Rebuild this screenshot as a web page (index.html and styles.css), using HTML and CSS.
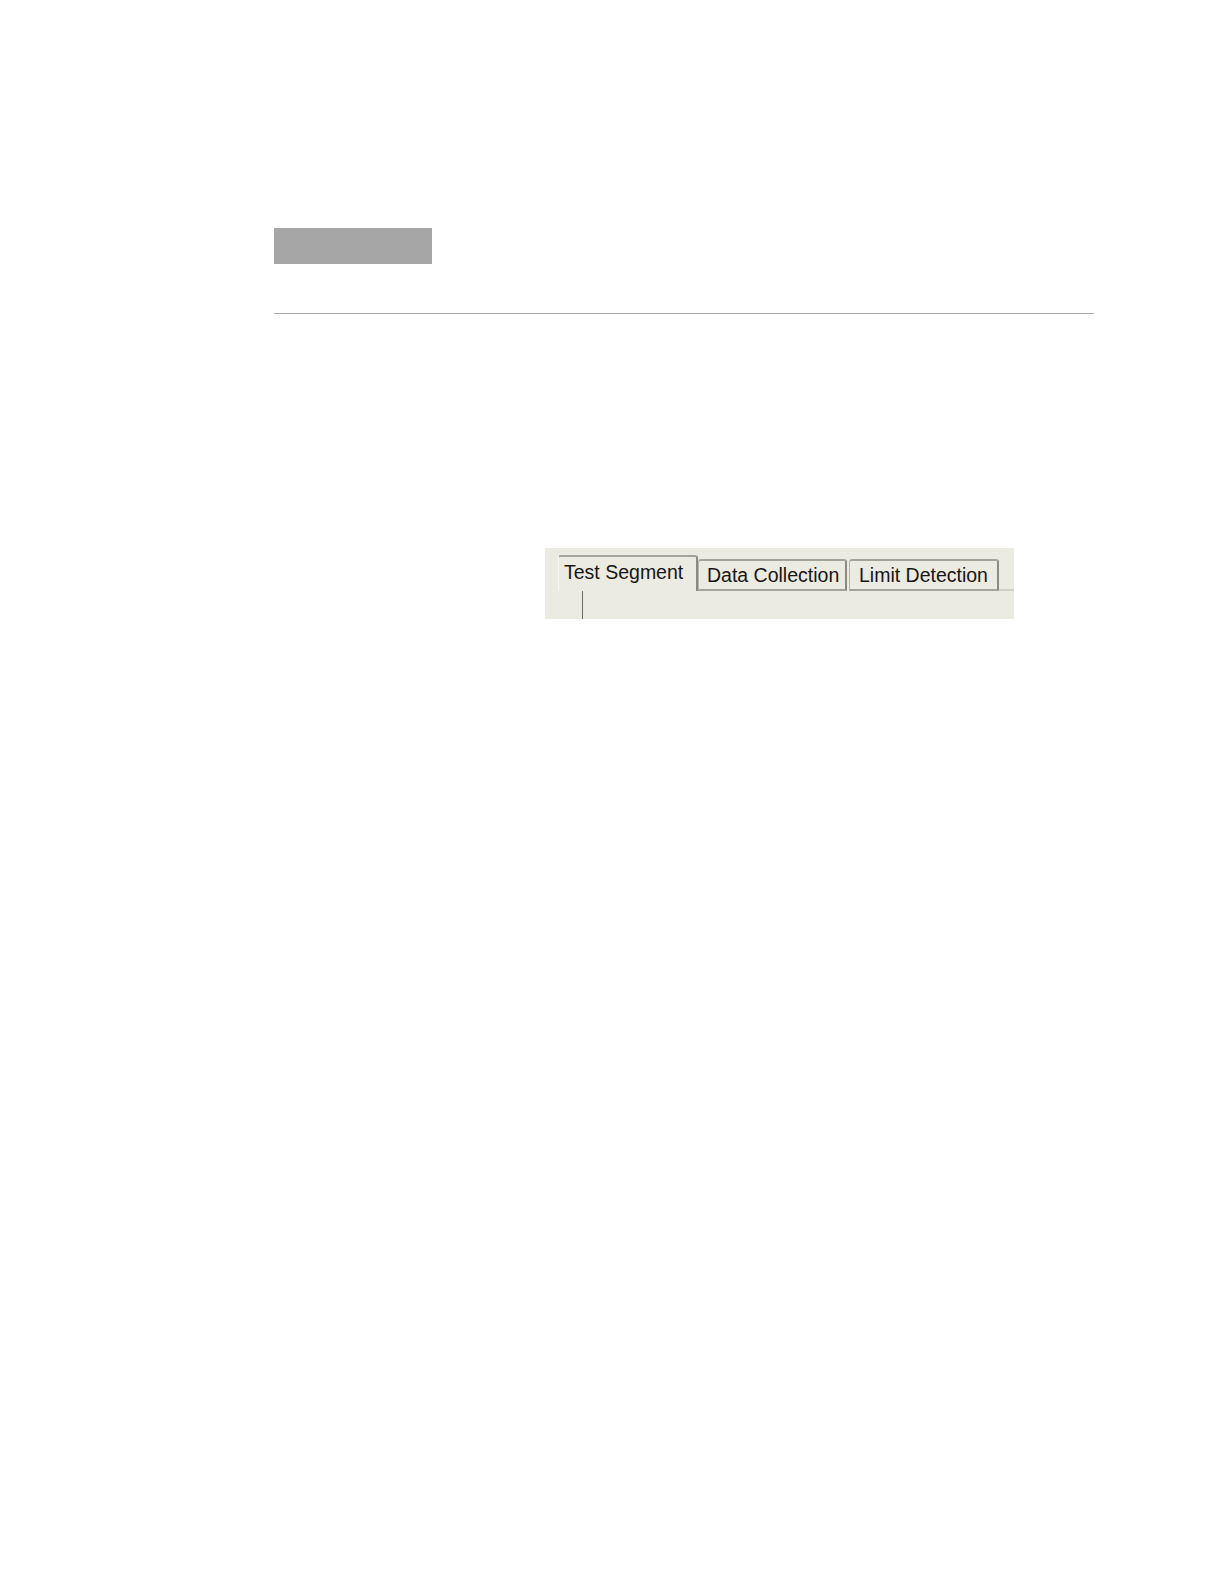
FILE: index.html
```html
<!DOCTYPE html>
<html>
<head>
<meta charset="utf-8">
<link rel="stylesheet" href="styles.css">
</head>
<body>
<div class="page">
  <div class="tag"></div>
  <div class="rule"></div>
  <div class="figure">
    <div class="tabstrip">
      <div class="tab active">Test Segment</div>
      <div class="tab tab-data">Data Collection</div>
      <div class="tab tab-limit">Limit Detection</div>
      <div class="strip-rest"></div>
    </div>
    <div class="panel">
      <div class="vline"></div>
    </div>
  </div>
</div>
</body>
</html>
```
FILE: styles.css
```css
html, body {
  margin: 0;
  padding: 0;
  background: #ffffff;
}
.page {
  padding: 228px 0 0 274px;
  font-family: "Liberation Sans", Arial, sans-serif;
}
.tag {
  width: 158px;
  height: 36px;
  background: #a6a6a6;
}
.rule {
  margin-top: 49px;
  width: 820px;
  border-top: 1px solid #ababab;
}
.figure {
  margin-top: 234px;
  margin-left: 271px;
  width: 469px;
  height: 71px;
  background: #ecebe1;
  display: flex;
  flex-direction: column;
  overflow: hidden;
}
.tabstrip {
  height: 43px;
  display: flex;
  align-items: flex-end;
  padding-left: 13px;
  box-sizing: border-box;
}
.tab {
  box-sizing: border-box;
  font-size: 19.5px;
  line-height: 22px;
  color: #161614;
  white-space: nowrap;
  border-top: 2px solid #a3a398;
  border-left: 1px solid #f8f8f2;
  border-right: 2px solid #8a8a80;
  border-bottom: 2px solid #a3a398;
  border-radius: 3px 3px 0 0;
  background: #ecebe1;
}
.tab.active {
  width: 140px;
  height: 36px;
  padding: 4px 0 0 5px;
  border-bottom: none;
  position: relative;
  z-index: 1;
}
.tab-data {
  width: 149px;
  height: 32px;
  padding: 3px 0 0 8px;
  border-left-color: #b5b5aa;
}
.tab-limit {
  width: 150px;
  height: 32px;
  padding: 3px 0 0 9px;
  margin-left: 2px;
  border-left-color: #b5b5aa;
}
.strip-rest {
  flex: 1;
  height: 32px;
  border-bottom: 2px solid #cfcfc4;
  box-sizing: border-box;
}
.panel {
  flex: 1;
  position: relative;
}
.vline {
  margin-left: 37px;
  width: 1px;
  height: 100%;
  background: #6d6d66;
}
```
